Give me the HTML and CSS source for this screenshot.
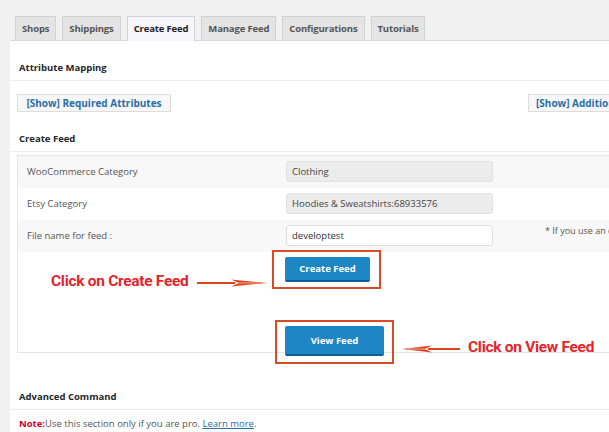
FILE: index.html
```html
<!DOCTYPE html>
<html>
<head>
<meta charset="utf-8">
<link rel="stylesheet" href="styles.css">
</head>
<body>
<div class="page">
  <nav class="tabs">
    <span class="tab">Shops</span>
    <span class="tab">Shippings</span>
    <span class="tab active">Create Feed</span>
    <span class="tab">Manage Feed</span>
    <span class="tab">Configurations</span>
    <span class="tab">Tutorials</span>
  </nav>
  <div class="panel">
    <h3 class="heading first">Attribute Mapping</h3>
    <div class="show-row">
      <button class="show-btn">[Show] Required Attributes</button>
      <button class="show-btn extra">[Show] Additional Attributes</button>
    </div>
    <h3 class="heading">Create Feed</h3>
    <div class="feed-table">
      <div class="row shade">
        <div class="label">WooCommerce Category</div>
        <div class="field"><div class="input disabled">Clothing</div></div>
        <div class="note"></div>
      </div>
      <div class="row">
        <div class="label">Etsy Category</div>
        <div class="field"><div class="input disabled">Hoodies &amp; Sweatshirts:68933576</div></div>
        <div class="note"></div>
      </div>
      <div class="row shade">
        <div class="label">File name for feed :</div>
        <div class="field"><div class="input">developtest</div></div>
        <div class="note">* If you use an existing file name it will be overwritten</div>
      </div>
      <div class="actions">
        <button class="primary create">Create Feed</button>
        <button class="primary view">View Feed</button>
      </div>

      <div class="mark mark-create"></div>
      <div class="mark mark-view"></div>
      <div class="callout callout-create">Click on Create Feed</div>
      <svg class="arrow arrow-create" width="70" height="12" viewBox="0 0 70 12">
        <rect x="0" y="5" width="38" height="2" fill="#e0421d"/>
        <path d="M34 2.5 L70 6 L34 9.5 L42 6 Z" fill="#e0421d"/>
        <rect x="38" y="5.2" width="24" height="1.6" fill="#fff" opacity="0.35"/>
      </svg>
      <svg class="arrow arrow-view" width="58" height="12" viewBox="0 0 58 12">
        <rect x="26" y="5" width="32" height="2" fill="#e0421d"/>
        <path d="M30 2.5 L0 6 L30 9.5 L23 6 Z" fill="#e0421d"/>
        <rect x="6" y="5.2" width="20" height="1.6" fill="#fff" opacity="0.35"/>
      </svg>
      <div class="callout callout-view">Click on View Feed</div>
    </div>
    <h3 class="heading adv">Advanced Command</h3>
    <p class="pro-note"><span class="warn">Note:</span>Use this section only if you are pro. <a href="#">Learn more</a>.</p>
  </div>
</div>
</body>
</html>
```

FILE: styles.css
```css
html, body {
  margin: 0;
  padding: 0;
  background: #f1f1f1;
  overflow: hidden;
  width: 609px;
  height: 432px;
}
body {
  font-family: "Open Sans", "Noto Sans", sans-serif;
  font-size: 9.5px;
  color: #444;
}
.page {
  padding-top: 16px;
  width: 800px;
}
.tabs {
  display: flex;
  gap: 6px;
  padding-left: 15px;
  height: 24px;
  align-items: flex-end;
}
.tab {
  box-sizing: border-box;
  height: 24px;
  line-height: 23px;
  padding: 0 6px;
  background: #e4e4e4;
  border: 1px solid #d2d2d2;
  border-bottom: none;
  font-weight: 700;
  font-size: 9.5px;
  color: #555;
  letter-spacing: -0.15px;
}
.tab.active {
  background: #f6f6fc;
  color: #222;
  height: 25px;
  margin-bottom: -1px;
  position: relative;
}
.panel {
  margin-left: 10px;
  background: #fff;
  border-top: 1px solid #d8d8d8;
  height: 400px;
}
.heading {
  margin: 0;
  padding: 20px 0 6px 9px;
  font-size: 9.5px;
  line-height: 13px;
  font-weight: 700;
  color: #23282d;
  border-bottom: 1px solid #ececec;
}
.show-row {
  display: flex;
  padding: 13px 0 0 7px;
}
.show-btn {
  font-family: inherit;
  font-size: 10px;
  font-weight: 700;
  color: #2a6ea6;
  background: #f7f7f7;
  border: 1px solid #dcdcdc;
  height: 18px;
  padding: 0 7px;
  line-height: 16px;
  width: 154px;
  white-space: nowrap;
  text-align: center;
  flex-shrink: 0;
}
.show-btn.extra {
  margin-left: 357px;
  width: 170px;
  text-align: left;
}
.feed-table {
  position: relative;
  margin: 3px 0 0 7px;
  border: 1px solid #e6e6e6;
  width: 700px;
  height: 196px;
}
.row {
  display: flex;
  align-items: center;
  height: 32px;
}
.row.shade {
  background: #f8f8f8;
}
.label {
  width: 268px;
  flex-shrink: 0;
  padding-left: 9px;
  box-sizing: border-box;
  color: #555;
  margin-top: -2px;
}
.field {
  width: 207px;
  flex-shrink: 0;
  margin-top: -2px;
}
.input {
  box-sizing: border-box;
  height: 21px;
  line-height: 19px;
  padding: 0 5px;
  border: 1px solid #ddd;
  border-radius: 3px;
  background: #fff;
  color: #333;
}
.input.disabled {
  background: #ececec;
  border-color: #e2e2e2;
  color: #444;
}
.note {
  margin-left: 52px;
  white-space: nowrap;
  color: #555;
  font-size: 9px;
  margin-top: -11px;
}
.actions {
  display: flex;
  flex-direction: column;
  align-items: flex-start;
  padding: 5px 0 0 267px;
  gap: 44px;
}
.primary {
  font-family: inherit;
  font-size: 9.5px;
  font-weight: 700;
  color: #fff;
  background: #1e86c5;
  border: none;
  border-bottom: 2px solid #0e5f92;
  border-radius: 2px;
}
.primary.create {
  width: 85px;
  height: 25px;
}
.primary.view {
  width: 99px;
  height: 30px;
}
.mark {
  position: absolute;
  border: 2px solid #d94b24;
  box-sizing: border-box;
}
.mark-create {
  left: 254px;
  top: 94px;
  width: 109px;
  height: 39px;
}
.mark-view {
  left: 257px;
  top: 164px;
  width: 119px;
  height: 44px;
}
.callout {
  position: absolute;
  font-family: Roboto, "Liberation Sans", sans-serif;
  font-weight: 700;
  font-size: 15.5px;
  color: #e3242b;
  white-space: nowrap;
  letter-spacing: -0.3px;
}
.callout-create {
  left: 33px;
  top: 116px;
}
.callout-view {
  left: 450px;
  top: 182px;
}
.arrow {
  position: absolute;
}
.arrow-create {
  left: 179px;
  top: 121px;
}
.arrow-view {
  left: 384px;
  top: 187px;
}
.heading.adv {
  padding-top: 37px;
}
.pro-note {
  margin: 0;
  padding: 7px 0 0 9px;
  font-size: 9.5px;
  color: #555;
}
.warn {
  color: #d0021b;
  font-weight: 700;
}
.pro-note a {
  color: #2a6ea6;
  text-decoration: underline;
}
```
